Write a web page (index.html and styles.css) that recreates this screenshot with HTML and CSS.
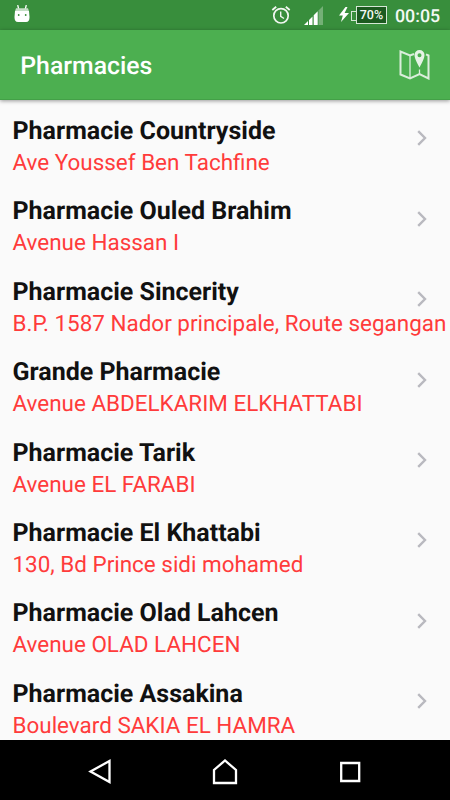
FILE: index.html
```
<!DOCTYPE html>
<html lang="en">
<head>
  <meta charset="UTF-8">
  <title>Pharmacies</title>
  <link rel="stylesheet" href="styles.css">
</head>
<body>
  <div class="statusbar">
    <svg class="robot" width="16" height="18" viewBox="0 0 16 18">
      <path d="M3.700 0L4.800 4.500M12.300 0L11.200 4.500" stroke="#fff" stroke-width="1.300"/>
      <path d="M2 3.200h12l1 3.300H1z" fill="#c4dec5"/>
      <path d="M1 6h14l.5 6c0 3.500-1 5-3.500 5H4C1.500 17 .5 15.500 .5 12z" fill="#fff"/>
      <circle cx="4.700" cy="10" r=".9" fill="#388e3c"/><circle cx="11.700" cy="10" r=".9" fill="#388e3c"/>
    </svg>
    <svg class="alarm" width="20" height="20" viewBox="0 0 20 20" fill="none" stroke="#f1f7f1">
      <circle cx="10" cy="10.800" r="7.200" stroke-width="1.700"/>
      <path d="M1.300 5L5.200 1.700M18.700 5L14.800 1.700" stroke-width="1.800"/>
      <path d="M9.700 6.500v4.800l3.300 2.200" stroke-width="1.400"/>
    </svg>
    <svg class="signal" width="19" height="19" viewBox="0 0 19 19">
      <path d="M14.500 4.500L19 0v19h-4.500z" fill="#fff" opacity=".3"/>
      <path d="M0 19l4-4v4zM5 19v-5l3.500-3.500V19zM9.700 19V9.300l4-4V19z" fill="#fff"/>
    </svg>
    <svg class="bolt" width="10" height="15" viewBox="0 0 10 15">
      <path d="M6.500 0L0 8.500h3.800L2 15l8-9H5.600L8.500 0z" fill="#fff"/>
    </svg>
    <div class="battery"><span>70%</span></div>
    <span class="clock">00:05</span>
  </div>

  <div class="appbar">
    <h1>Pharmacies</h1>
    <svg width="31" height="30" viewBox="0 0 31 30">
      <path d="M15 4L11 5.500 1.500 1.500v23l9.500 4 9.500-4.500 9 4.500V5.500L27 4.300" fill="none" stroke="#dbeedc" stroke-width="2"/>
      <path d="M11 5.500v23M20.500 19.500v4.500" stroke="#dbeedc" stroke-width="1.300"/>
      <path d="M20.500 0a5 5 0 0 0-5 5c0 4 5 12.500 5 12.500s5-8.500 5-12.500a5 5 0 0 0-5-5zm0 3.200a2 2 0 1 1 0 4 2 2 0 0 1 0-4z" fill="#e6f3e6"/>
    </svg>
  </div>

  <div class="list" id="list"></div>

  <div class="navbar">
    <svg width="24" height="26" viewBox="0 0 24 26"><path d="M21.500 2v21L2.500 12.500z"/></svg>
    <svg width="26" height="26" viewBox="0 0 26 26"><path d="M2 24V11L13 1.500 24 11v13z"/></svg>
    <svg width="24" height="22" viewBox="0 0 24 22"><path d="M3.200 2h18v18h-18z"/></svg>
  </div>

  <script>
    var pharmacies = [
      ["Pharmacie Countryside", "Ave Youssef Ben Tachfine"],
      ["Pharmacie Ouled Brahim", "Avenue Hassan I"],
      ["Pharmacie Sincerity", "B.P. 1587 Nador principale, Route segangan"],
      ["Grande Pharmacie", "Avenue ABDELKARIM ELKHATTABI"],
      ["Pharmacie Tarik", "Avenue EL FARABI"],
      ["Pharmacie El Khattabi", "130, Bd Prince sidi mohamed"],
      ["Pharmacie Olad Lahcen", "Avenue OLAD LAHCEN"],
      ["Pharmacie Assakina", "Boulevard SAKIA EL HAMRA"]
    ];
    var html = "";
    pharmacies.forEach(function (p) {
      html += `<div class="row">
        <div class="info"><div class="name">${p[0]}</div><div class="address">${p[1]}</div></div>
        <svg class="chevron" width="10" height="16" viewBox="0 0 10 16"><path d="M1.200 1.200L8 8l-6.800 6.800"/></svg>
      </div>`;
    });
    document.getElementById("list").innerHTML = html;
  </script>
</body>
</html>
```
FILE: styles.css
```
* {
  box-sizing: border-box;
}
body {
  margin: 0;
  height: 800px;
  display: flex;
  flex-direction: column;
  overflow: hidden;
  font-family: Roboto, sans-serif;
  text-rendering: geometricPrecision;
  background-color: #fafafa;
}
svg {
  display: block;
  flex: none;
}

/* Status bar */
.statusbar {
  flex: none;
  display: flex;
  align-items: flex-start;
  height: 30px;
  padding-left: 14.4px;
  background-color: #388e3c;
  color: #f4f9f4;
}
.robot {
  margin-top: 5px;
}
.alarm {
  margin: 5px 0 0 240.6px;
}
.signal {
  margin: 6px 0 0 13px;
}
.bolt {
  margin: 7px 0 0 16px;
}
.battery {
  display: flex;
  margin: 6px 0 0 2px;
}
.battery::before {
  content: "";
  width: 5px;
  height: 8px;
  margin: 5px -1px 0 0;
  border: 1px solid #d5e7d6;
  border-right: none;
}
.battery span {
  width: 31px;
  height: 18px;
  border: 1px solid #d5e7d6;
  background-color: #1c5a20;
  font-size: 12.5px;
  font-weight: 500;
  line-height: 17px;
  text-align: center;
}
.clock {
  margin: 6px 0 0 8px;
  font-size: 17.8px;
  font-weight: 500;
  line-height: 21px;
}

/* App bar */
.appbar {
  flex: none;
  position: relative;
  display: flex;
  align-items: center;
  justify-content: space-between;
  height: 70px;
  padding: 0 20px 0 20.3px;
  background-color: #4caf50;
  border-bottom: 1px solid #43a047;
  box-shadow: 0 1px 4px rgba(0, 0, 0, 0.4);
}
.appbar h1 {
  margin: 4px 0 0;
  font-size: 24.8px;
  font-weight: 500;
  color: #fff;
}

/* Pharmacy list */
.list {
  flex: 1;
  min-height: 0;
  overflow: hidden;
  padding-top: 16px;
}
.row {
  display: flex;
  justify-content: space-between;
  height: 80.4px;
  padding: 0 23px 0 12.5px;
}
.info {
  width: 0;
  white-space: nowrap;
}
.name {
  font-size: 25px;
  font-weight: 700;
  line-height: 32px;
  color: #111;
}
.address {
  font-size: 22.45px;
  font-weight: 400;
  line-height: 31px;
  color: #ff3b3b;
}
.chevron {
  margin-top: 14.4px;
  fill: none;
  stroke: #b9b9bf;
  stroke-width: 2.4;
}

/* Navigation bar */
.navbar {
  flex: none;
  display: flex;
  align-items: center;
  height: 60px;
  padding: 3px 0 0 88px;
  background-color: #000;
}
.navbar svg {
  fill: none;
  stroke: #fff;
  stroke-width: 2.3;
}
.navbar svg + svg {
  margin-left: 100px;
}
```
